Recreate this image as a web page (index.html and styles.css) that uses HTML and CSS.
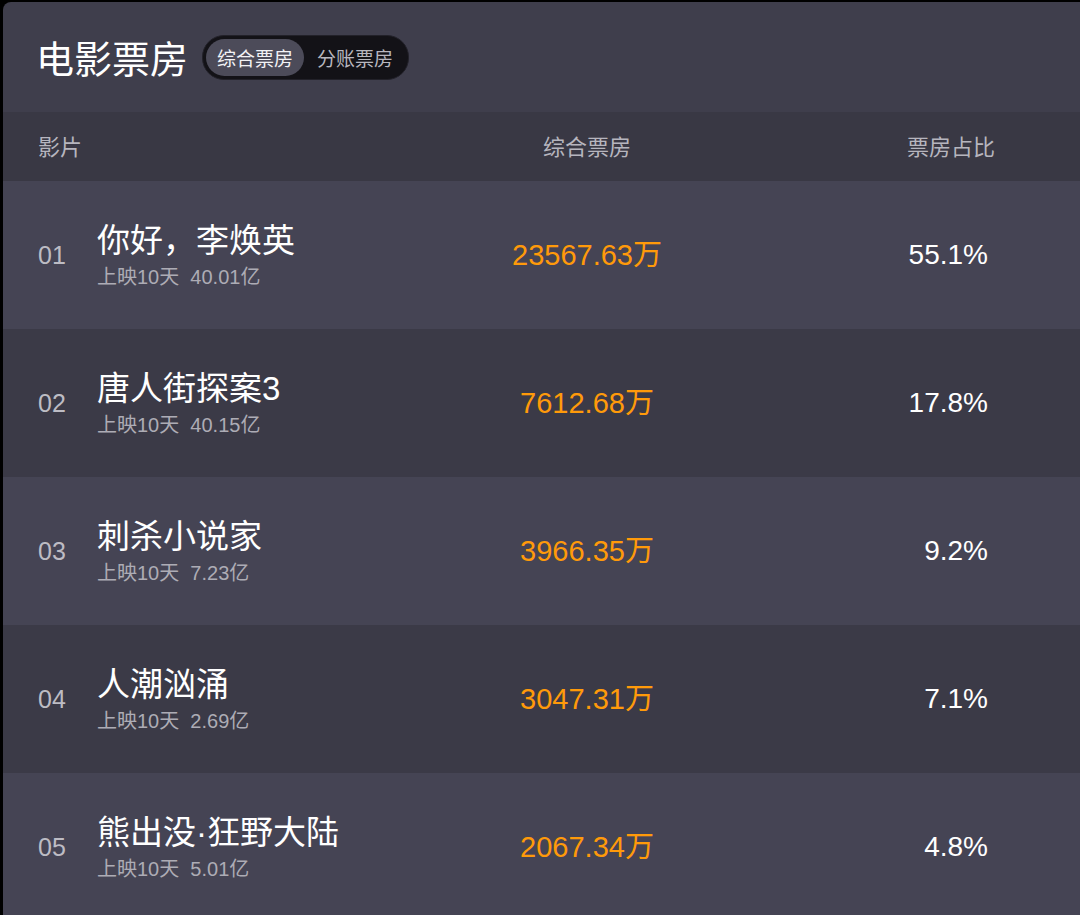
FILE: index.html
```html
<!DOCTYPE html>
<html>
<head>
    <title>电影票房</title>
    <link rel="stylesheet" href="styles.css">
</head>
<body>
    <div class="board">
        <div class="board-head">
            <h1>电影票房</h1>
            <div class="switch">
                <span class="switch-item active">综合票房</span>
                <span class="switch-item">分账票房</span>
            </div>
        </div>

        <div class="table-head">
            <span>影片</span>
            <span class="col-mid">综合票房</span>
            <span class="col-end">票房占比</span>
        </div>

        <div class="movie">
            <span class="rank">01</span>
            <div class="info">
                <div class="name">你好，李焕英</div>
                <div class="sub">上映10天 &nbsp;40.01亿</div>
            </div>
            <span class="box col-mid">23567.63万</span>
            <span class="share col-end">55.1%</span>
        </div>
        <div class="movie">
            <span class="rank">02</span>
            <div class="info">
                <div class="name">唐人街探案3</div>
                <div class="sub">上映10天 &nbsp;40.15亿</div>
            </div>
            <span class="box col-mid">7612.68万</span>
            <span class="share col-end">17.8%</span>
        </div>
        <div class="movie">
            <span class="rank">03</span>
            <div class="info">
                <div class="name">刺杀小说家</div>
                <div class="sub">上映10天 &nbsp;7.23亿</div>
            </div>
            <span class="box col-mid">3966.35万</span>
            <span class="share col-end">9.2%</span>
        </div>
        <div class="movie">
            <span class="rank">04</span>
            <div class="info">
                <div class="name">人潮汹涌</div>
                <div class="sub">上映10天 &nbsp;2.69亿</div>
            </div>
            <span class="box col-mid">3047.31万</span>
            <span class="share col-end">7.1%</span>
        </div>
        <div class="movie">
            <span class="rank">05</span>
            <div class="info">
                <div class="name">熊出没·狂野大陆</div>
                <div class="sub">上映10天 &nbsp;5.01亿</div>
            </div>
            <span class="box col-mid">2067.34万</span>
            <span class="share col-end">4.8%</span>
        </div>
    </div>
</body>
</html>
```

FILE: styles.css
```css
body {
    margin: 0;
    background: #000;
    font-family: "Liberation Sans", "Noto Sans CJK SC", sans-serif;
    overflow: hidden;
}

.board {
    margin: 2px 0 0 3px;
    background: #3f3e4c;
    border-top-left-radius: 8px;
    min-height: 913px;
}

.board-head {
    height: 110px;
    display: flex;
    align-items: center;
    padding-left: 33px;
    gap: 14px;
}

.board-head h1 {
    margin: 0 0 2px 0;
    font-size: 38px;
    font-weight: normal;
    color: #fff;
    font-family: "Noto Sans CJK SC", sans-serif;
}

.switch {
    display: flex;
    background: #131217;
    border-radius: 22px;
    padding: 3px;
    border: 1px solid #222129;
    margin-top: 1px;
}

.switch-item {
    height: 37px;
    line-height: 37px;
    padding: 0 11px;
    font-size: 19px;
    color: #b8b7bf;
    border-radius: 19px;
    font-family: "Noto Sans CJK SC", sans-serif;
}

.switch-item + .switch-item {
    padding: 0 12px 0 13px;
}

.switch-item.active {
    background: #4c4b59;
    color: #f2f2f5;
}

.table-head,
.movie {
    display: grid;
    grid-template-columns: 399px 300px 1fr;
    align-items: center;
    padding: 0 85px 0 35px;
}

.table-head {
    height: 69px;
    background: #393844;
    font-size: 22px;
    color: #b6b5be;
    font-family: "Noto Sans CJK SC", sans-serif;
}

.table-head span {
    margin-bottom: 3px;
}

.col-mid {
    text-align: center;
}

.col-end {
    text-align: right;
}

.movie {
    height: 148px;
    background: #454454;
    grid-template-columns: 59px 340px 300px 1fr;
}

.movie:nth-child(even) {
    background: #3b3a47;
}

.rank {
    font-size: 25px;
    color: #bdbcc4;
}

.name {
    font-size: 33px;
    color: #fff;
    line-height: 40px;
}

.sub {
    font-size: 20px;
    color: #adacb5;
    line-height: 24px;
    margin-top: 4px;
}

.box {
    font-size: 29px;
    color: #ff9a0a;
    margin-bottom: 6px;
}

.share {
    font-size: 28px;
    color: #fff;
    padding-right: 7px;
}
```
